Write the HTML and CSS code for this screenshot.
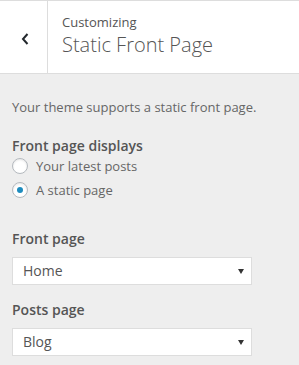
FILE: index.html
```html
<!DOCTYPE html>
<html lang="en">
<head>
    <meta charset="UTF-8">
    <title>Static Front Page</title>
    <link rel="stylesheet" href="styles.css">
</head>
<body>

<div class="customize-header">
    <button class="back-button" type="button" aria-label="Back">
        <svg width="8" height="12" viewBox="0 0 8 12">
            <path d="M6.5 1 L2 6 L6.5 11" fill="none" stroke="#23282d" stroke-width="2"/>
        </svg>
    </button>
    <div class="header-title">
        <span class="header-action">Customizing</span>
        <h2>Static Front Page</h2>
    </div>
</div>

<div class="section-content">
    <p class="description">Your theme supports a static front page.</p>

    <div class="control radio-control">
        <span class="control-title">Front page displays</span>
        <label class="radio-row"><span class="radio"></span>Your latest posts</label>
        <label class="radio-row"><span class="radio checked"></span>A static page</label>
    </div>

    <div class="control">
        <span class="control-title">Front page</span>
        <div class="select-box">Home<span class="arrow"></span></div>
    </div>

    <div class="control">
        <span class="control-title">Posts page</span>
        <div class="select-box">Blog<span class="arrow"></span></div>
    </div>
</div>

</body>
</html>
```

FILE: styles.css
```css
body {
    margin: 0;
    background: #eeeeee;
    font-family: 'Open Sans', sans-serif;
    color: #555555;
    font-size: 13px;
}

.customize-header {
    display: flex;
    height: 72px;
    background: #ffffff;
    border-top: 1px solid #dddddd;
    border-bottom: 1px solid #dddddd;
}

.back-button {
    width: 48px;
    padding: 0;
    border: none;
    border-right: 1px solid #dddddd;
    background: #ffffff;
    display: flex;
    align-items: center;
    justify-content: center;
}

.back-button svg {
    margin-left: 3px;
    margin-top: 3px;
}

.header-title {
    padding: 12px 0 0 14px;
}

.header-action {
    display: block;
    font-size: 13px;
    line-height: 18px;
}

.header-title h2 {
    margin: 0;
    font-size: 20px;
    font-weight: 300;
    line-height: 28px;
}

.section-content {
    padding: 24px 12px 0 12px;
}

.description {
    margin: 0 0 20px 0;
    line-height: 18px;
    color: #666666;
}

.control {
    margin-bottom: 15px;
}

.radio-control {
    margin-bottom: 27px;
}

.control-title {
    display: block;
    font-size: 14px;
    font-weight: 600;
    line-height: 20px;
}

.radio-control .control-title {
    margin-bottom: -2px;
}

.radio-row {
    display: flex;
    align-items: center;
    height: 24px;
    color: #666666;
}

.radio {
    width: 14px;
    height: 14px;
    border: 1px solid #b4b9be;
    border-radius: 50%;
    background: #ffffff;
    box-shadow: inset 0 1px 2px rgba(0, 0, 0, 0.1);
    margin-right: 8px;
    display: flex;
    align-items: center;
    justify-content: center;
}

.radio.checked::after {
    content: "";
    width: 6px;
    height: 6px;
    border-radius: 50%;
    background: #1e8cbe;
}

.select-box {
    position: relative;
    width: 228px;
    height: 26px;
    margin-top: 8px;
    padding-left: 10px;
    background: #ffffff;
    border: 1px solid #dddddd;
    line-height: 26px;
    font-size: 14px;
    color: #555555;
}

.arrow {
    position: absolute;
    right: 7px;
    top: 11px;
    width: 0;
    height: 0;
    border-left: 3px solid transparent;
    border-right: 3px solid transparent;
    border-top: 5px solid #333333;
}
```
